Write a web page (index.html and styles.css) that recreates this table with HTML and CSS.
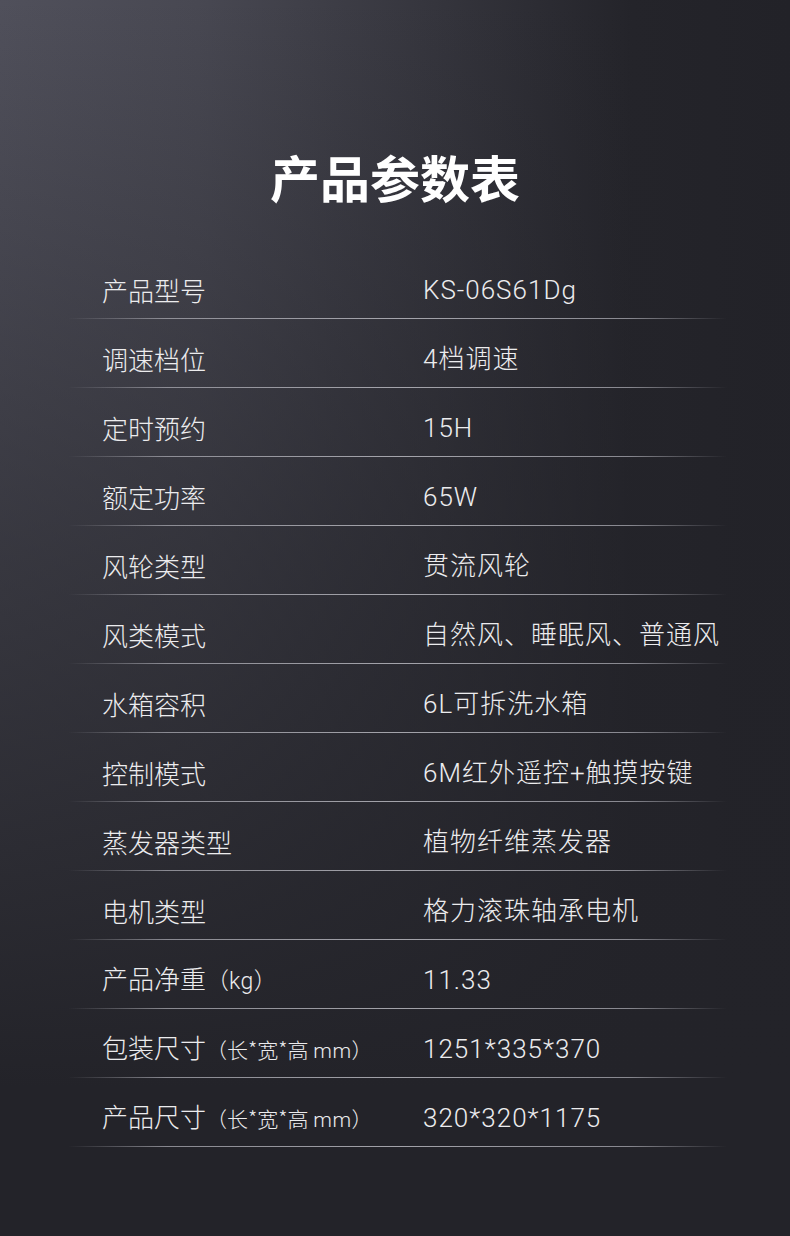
FILE: index.html
```html
<!DOCTYPE html>
<html lang="zh-CN">
<head>
<meta charset="utf-8">
<link rel="stylesheet" href="styles.css">
</head>
<body>
<div class="page">
  <h1 class="title">产品参数表</h1>
  <div class="table">
    <div class="row"><div class="label">产品型号</div><div class="value">KS-06S61Dg</div></div>
    <div class="row"><div class="label">调速档位</div><div class="value">4档调速</div></div>
    <div class="row"><div class="label">定时预约</div><div class="value">15H</div></div>
    <div class="row"><div class="label">额定功率</div><div class="value">65W</div></div>
    <div class="row"><div class="label">风轮类型</div><div class="value">贯流风轮</div></div>
    <div class="row"><div class="label">风类模式</div><div class="value">自然风、睡眠风、普通风</div></div>
    <div class="row"><div class="label">水箱容积</div><div class="value">6L可拆洗水箱</div></div>
    <div class="row"><div class="label">控制模式</div><div class="value">6M红外遥控+触摸按键</div></div>
    <div class="row"><div class="label">蒸发器类型</div><div class="value">植物纤维蒸发器</div></div>
    <div class="row"><div class="label">电机类型</div><div class="value">格力滚珠轴承电机</div></div>
    <div class="row"><div class="label">产品净重<span class="unit">（<span class="latin">kg</span>）</span></div><div class="value">11.33</div></div>
    <div class="row"><div class="label">包装尺寸<span class="unit small">（长*宽*高 <span class="latin">mm</span>）</span></div><div class="value">1251*335*370</div></div>
    <div class="row"><div class="label">产品尺寸<span class="unit small">（长*宽*高 <span class="latin">mm</span>）</span></div><div class="value">320*320*1175</div></div>
  </div>
</div>
</body>
</html>
```

FILE: styles.css
```css
html, body {
  margin: 0;
  padding: 0;
}
body {
  width: 790px;
  height: 1236px;
  overflow: hidden;
  font-family: "Noto Sans CJK SC", "Noto Sans", sans-serif;
  color: #ececee;
}
.page {
  width: 790px;
  height: 1236px;
  background:
    linear-gradient(to bottom, rgba(35,35,41,0) 0%, rgba(35,35,41,0.55) 45%, rgba(35,35,41,1) 88%),
    linear-gradient(to right, #50505b 0%, #484852 25%, #35353d 55%, #24242a 80%, #222228 100%);
  padding-top: 146px;
  box-sizing: border-box;
}
.title {
  margin: 0;
  text-align: center;
  font-size: 50px;
  line-height: 60px;
  font-weight: 700;
  color: #ffffff;
}
.table {
  margin: 44px 63px 0 68px;
  display: flex;
  flex-direction: column;
}
.row {
  position: relative;
  display: flex;
  align-items: center;
  height: 69px;
  padding-bottom: 15px;
  padding-top: 26px;
  box-sizing: border-box;
  font-size: 26px;
  line-height: 28px;
  font-weight: 300;
}
.row::after {
  content: "";
  position: absolute;
  left: 0;
  right: 0;
  bottom: 0;
  height: 1px;
  background: linear-gradient(to right, rgba(170,170,178,0) 0%, rgba(170,170,178,0.75) 15%, rgba(185,185,192,0.85) 50%, rgba(170,170,178,0.75) 85%, rgba(170,170,178,0) 100%);
}
.label {
  width: 355px;
  padding-left: 34px;
  box-sizing: border-box;
  white-space: nowrap;
}
.unit {
  font-size: 23px;
}
.unit.small {
  font-size: 21px;
}
.latin {
  font-family: Roboto, "Noto Sans CJK SC", sans-serif;
  font-weight: 300;
  letter-spacing: 0.5px;
}
.value {
  white-space: nowrap;
  font-family: Roboto, "Noto Sans CJK SC", sans-serif;
  font-weight: 300;
  letter-spacing: 1px;
}
```
